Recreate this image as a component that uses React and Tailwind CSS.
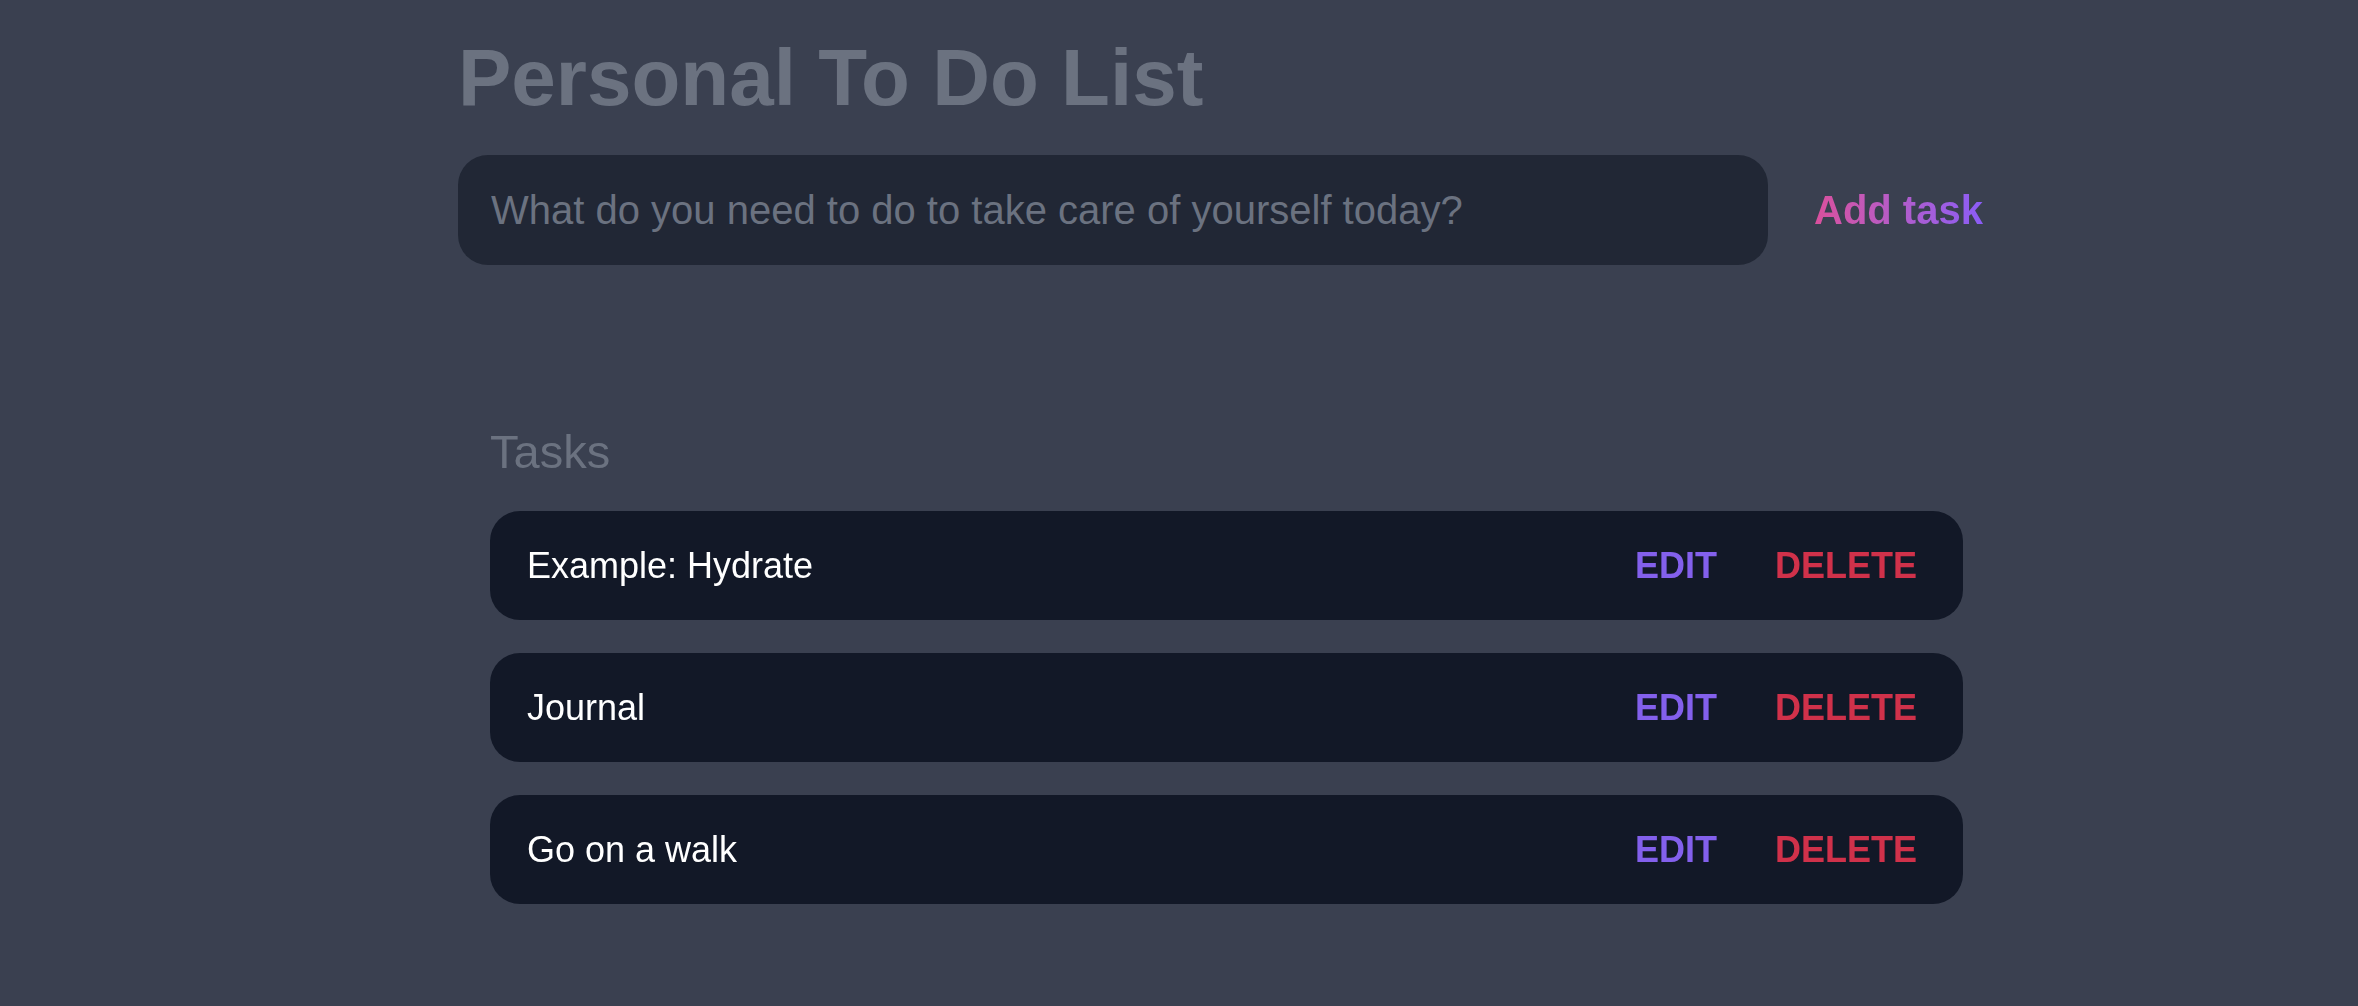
import { useState } from 'react'

const initialTasks = ['Example: Hydrate', 'Journal', 'Go on a walk']

export default function App() {
  const [tasks, setTasks] = useState(initialTasks)
  const [text, setText] = useState('')

  const addTask = () => {
    if (!text.trim()) return
    setTasks([...tasks, text.trim()])
    setText('')
  }

  return (
    <div className="min-h-screen bg-[#3a4050] font-['Liberation_Sans',Arial,sans-serif]">
      <div className="mx-auto w-[1442px] pt-[38px]">
        <h1 className="text-[80px] leading-none font-bold text-[#6b7280]">Personal To Do List</h1>

        <div className="mt-[37px] flex items-center">
          <input
            autoFocus
            value={text}
            onChange={e => setText(e.target.value)}
            placeholder="What do you need to do to take care of yourself today?"
            className="w-[1310px] h-[110px] shrink-0 rounded-[30px] bg-[#212735] px-[33px] text-[40px] text-white placeholder:text-[#6b7280] outline-none"
          />
          <button
            onClick={addTask}
            className="ml-[46px] shrink-0 whitespace-nowrap text-[40px] font-bold leading-none bg-linear-to-r from-[#da4f9c] to-[#8b5cf6] bg-clip-text text-transparent"
          >
            Add task
          </button>
        </div>

        {/* Tasks */}
        <div className="ml-[32px] mt-[163px] w-[1473px]">
          <h2 className="text-[47px] leading-none font-light text-[#6b7280]">Tasks</h2>
          <div className="mt-[36px] flex flex-col gap-[33px]">
            {tasks.map((t, i) => (
              <div key={i} className="flex h-[109px] items-center justify-between rounded-[30px] bg-[#121827] pl-[37px] pr-[46px]">
                <span className="text-[36px] text-white">{t}</span>
                <div className="flex items-center gap-[58px] text-[36px] font-bold">
                  <button className="text-[#8360ec]">EDIT</button>
                  <button
                    className="text-[#d0314a]"
                    onClick={() => setTasks(tasks.filter((_, j) => j !== i))}
                  >
                    DELETE
                  </button>
                </div>
              </div>
            ))}
          </div>
        </div>
      </div>
    </div>
  )
}
